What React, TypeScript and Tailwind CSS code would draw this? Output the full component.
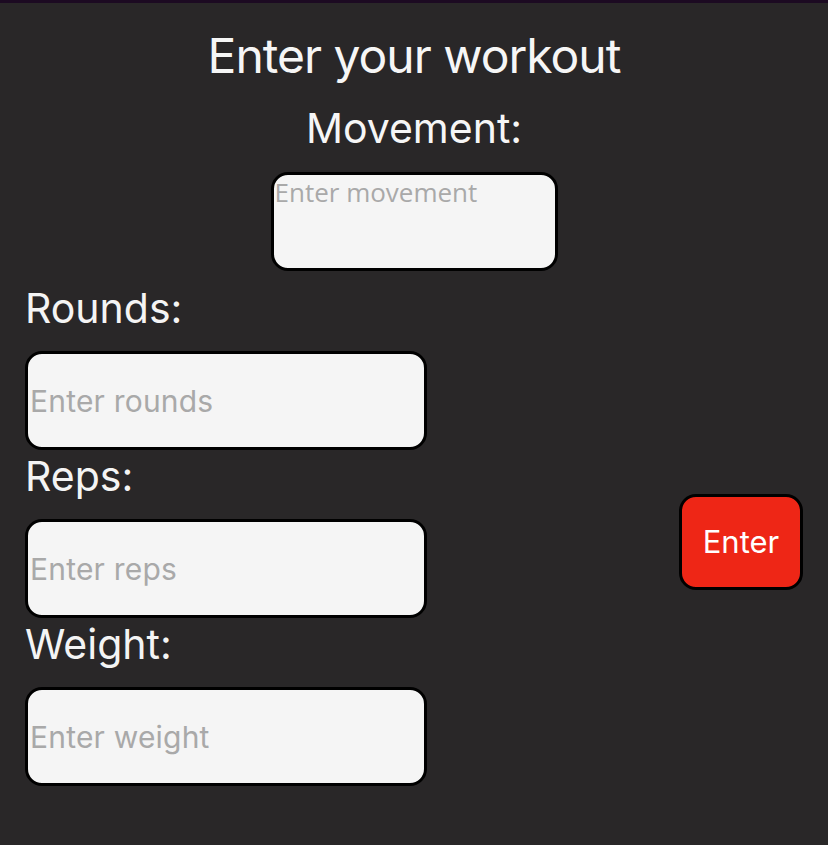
import React from 'react';

const sans = { fontFamily: 'Inter, "Liberation Sans", sans-serif' };

function Field({ label, placeholder }: { label: string; placeholder: string }) {
  return (
    <div className="flex flex-col">
      <label className="text-[41px] leading-none text-[#f4f4f4] mb-[22px]">{label}</label>
      <input
        placeholder={placeholder}
        className="w-[402px] h-[99px] rounded-[17px] border-[3px] border-black bg-[#f5f5f5] px-[2px] text-[30px] tracking-[0.2px] text-black outline-none placeholder:text-[#a9a9a9]"
        style={sans}
      />
    </div>
  );
}

export default function App() {
  return (
    <div
      className="min-h-[845px] w-full bg-[#292728] border-t-[3px] border-[#1c0a22] pt-[29px] text-white"
      style={sans}
    >
      <h1 className="text-center text-[48px] leading-none text-[#f6f6f6] tracking-[-1px]">Enter your workout</h1>
      <h2 className="mt-[28px] text-center text-[41px] leading-none text-[#f6f6f6]">Movement:</h2>
      <div className="mt-[23px] flex justify-center">
        <textarea
          placeholder="Enter movement"
          className="w-[287px] h-[99px] resize-none rounded-[17px] border-[3px] border-black bg-[#f5f5f5] p-0 pl-[1px] text-[26px] leading-[34px] text-black outline-none placeholder:text-[#a9a9a9]"
          style={{ fontFamily: '"Open Sans", "Noto Sans", sans-serif' }}
        />
      </div>

      <div className="mt-[17px] flex items-center justify-between px-[25px]">
        <div className="flex flex-col gap-[6px]">
          <Field label="Rounds:" placeholder="Enter rounds" />
          <Field label="Reps:" placeholder="Enter reps" />
          <Field label="Weight:" placeholder="Enter weight" />
        </div>
        <button className="mt-[10px] w-[124px] h-[96px] rounded-[17px] border-[3px] border-black bg-[#ee2616] text-[31px] text-white">
          Enter
        </button>
      </div>
    </div>
  );
}
